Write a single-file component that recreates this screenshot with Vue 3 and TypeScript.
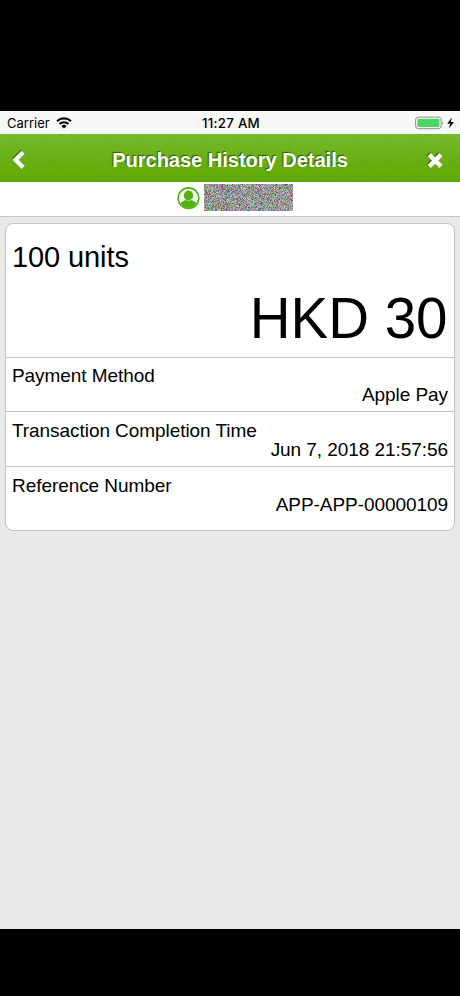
<script setup lang="ts">
import { onMounted, ref } from 'vue'

interface DetailRow {
  label: string
  value: string
}

const rows: DetailRow[] = [
  { label: 'Payment Method', value: 'Apple Pay' },
  { label: 'Transaction Completion Time', value: 'Jun 7, 2018 21:57:56' },
  { label: 'Reference Number', value: 'APP-APP-00000109' },
]

const mask = ref<HTMLCanvasElement | null>(null)

// Fills the account name mask with coloured noise from a fixed seed.
onMounted(() => {
  const ctx = mask.value?.getContext('2d')
  if (!ctx) return
  let seed = 20180607
  const next = (): number => {
    seed = (Math.imul(seed, 1664525) + 1013904223) >>> 0
    return seed / 4294967296
  }
  const image = ctx.createImageData(89, 27)
  for (let i = 0; i < image.data.length; i += 4) {
    const base = 70 + next() * 75
    image.data[i] = base + next() * 85
    image.data[i + 1] = base + next() * 85
    image.data[i + 2] = base + next() * 85
    image.data[i + 3] = 255
  }
  ctx.putImageData(image, 0, 0)
})
</script>

<template>
  <div class="screen">
    <div class="status">
      <div class="carrier">
        <span>Carrier</span>
        <svg class="wifi" width="16" height="12" viewBox="0 0 16 12">
          <path d="M1 4.2A10.2 10.2 0 0 1 15 4.2" fill="none" stroke="#000" stroke-width="2.1" />
          <path d="M3.5 6.9A6.6 6.6 0 0 1 12.5 6.9" fill="none" stroke="#000" stroke-width="2" />
          <path d="M8 11.6L5.5 9A3.6 3.6 0 0 1 10.5 9Z" />
        </svg>
      </div>
      <span class="clock">11:27 AM</span>
      <div class="power">
        <svg width="40" height="14" viewBox="0 0 40 14">
          <rect x=".6" y="1.1" width="25.6" height="11.6" rx="2.8" fill="#fcfcfc" stroke="#8c8c8c" stroke-width="1" />
          <rect x="2.3" y="2.8" width="22.2" height="8.2" rx="1.2" fill="#4cd664" />
          <path d="M27.4 5Q29.2 7 27.4 9Z" fill="#8c8c8c" />
          <path d="M36.8 1.3L32.3 7.7H35.2L34 12.6L39 6H35.8Z" />
        </svg>
      </div>
    </div>

    <header class="bar">
      <svg class="icon back" width="17" height="22" viewBox="0 0 17 22">
        <path d="M13.1 3.2L5.6 10.8L13.1 18.4" fill="none" stroke="#fff" stroke-width="4.4" />
      </svg>
      <h1>Purchase History Details</h1>
      <svg class="icon close" width="16" height="16" viewBox="0 0 16 16">
        <path d="M3.9 3.3L12.3 11.7M12.3 3.3L3.9 11.7" stroke="#fff" stroke-width="4.5" stroke-linecap="square" />
      </svg>
    </header>

    <div class="account">
      <svg width="24" height="24" viewBox="0 0 24 24">
        <circle cx="12.5" cy="12.2" r="10.3" fill="#fff" stroke="#50b30c" stroke-width="1.6" />
        <ellipse cx="12.5" cy="9.5" rx="4.7" ry="4.9" fill="#50b30c" />
        <path d="M4.6 17.4C6 15.1 8 15 9.7 14.1Q12.5 15.6 15.3 14.1C17 15 19 15.1 20.4 17.4A9.2 9.2 0 0 1 4.6 17.4Z" fill="#50b30c" />
      </svg>
      <canvas ref="mask" width="89" height="27"></canvas>
    </div>

    <main>
      <section class="card">
        <div class="summary">
          <div class="units">100 units</div>
          <div class="amount">HKD 30</div>
        </div>
        <div v-for="row in rows" :key="row.label" class="row">
          <div class="label">{{ row.label }}</div>
          <div class="value">{{ row.value }}</div>
        </div>
      </section>
    </main>
  </div>
</template>

<style>
body {
  background: #000;
}
</style>

<style scoped>
.screen {
  box-sizing: border-box;
  width: 460px;
  height: 996px;
  padding: 111px 0 67px;
  display: flex;
  flex-direction: column;
  background: #000;
  color: #000;
  font-family: "Liberation Sans", Arial, sans-serif;
}
.status {
  height: 23px;
  flex: none;
  display: grid;
  grid-template-columns: 1fr auto 1fr;
  align-items: center;
  padding: 1px 5px 0 7px;
  box-sizing: border-box;
  background: #f8f8f7;
  font: 13px/22px Inter, sans-serif;
}
.carrier {
  display: flex;
  align-items: center;
  gap: 6px;
}
.wifi {
  margin-bottom: 1px;
}
.clock {
  font-weight: 500;
  font-size: 13.3px;
  letter-spacing: 0.25px;
}
.power {
  display: flex;
  justify-content: flex-end;
}
.bar {
  height: 48px;
  flex: none;
  display: grid;
  grid-template-columns: 17px 1fr 16px;
  align-items: center;
  box-sizing: border-box;
  padding: 4px 17px 0 10px;
  background:
    repeating-linear-gradient(48deg, rgba(255, 255, 255, 0.015) 0 3px, transparent 3px 8px),
    linear-gradient(#74b92c, #66ad0e 65%, #5fa800);
}
.bar h1 {
  margin: 0;
  padding-left: 6px;
  text-align: center;
  font-size: 20px;
  line-height: 24px;
  color: #fff;
  text-shadow: -1px -1px 1px rgba(25, 65, 0, 0.8);
}
.icon {
  filter: drop-shadow(-1px -1px 0.5px rgba(25, 65, 0, 0.6));
}
.close {
  margin-top: 1px;
}
.account {
  height: 35px;
  flex: none;
  box-sizing: border-box;
  display: flex;
  justify-content: center;
  align-items: center;
  gap: 4px;
  padding: 0 0 3px 9px;
  background: #fff;
  border-bottom: 1px solid #c6c6c6;
}
main {
  flex: 1;
  padding: 6px 5px;
  background: #e9e9e9;
}
.card {
  box-sizing: border-box;
  height: 308px;
  border: 1px solid #c3c3c3;
  border-radius: 8px;
  background: #fff;
}
.summary {
  height: 133px;
  box-sizing: border-box;
  padding: 17px 6.5px 0 6px;
}
.units {
  font-size: 29px;
  line-height: 33px;
  letter-spacing: -0.1px;
}
.amount {
  margin-top: 12px;
  font-size: 56.5px;
  line-height: 65px;
  text-align: right;
}
.row {
  height: 55px;
  box-sizing: border-box;
  border-top: 1px solid #c6c6c6;
  padding: 9px 6px 0;
  font-size: 19px;
  line-height: 19px;
  letter-spacing: -0.06px;
}
.row:nth-child(2) {
  height: 54px;
  padding-top: 8px;
}
.value {
  text-align: right;
}
</style>
